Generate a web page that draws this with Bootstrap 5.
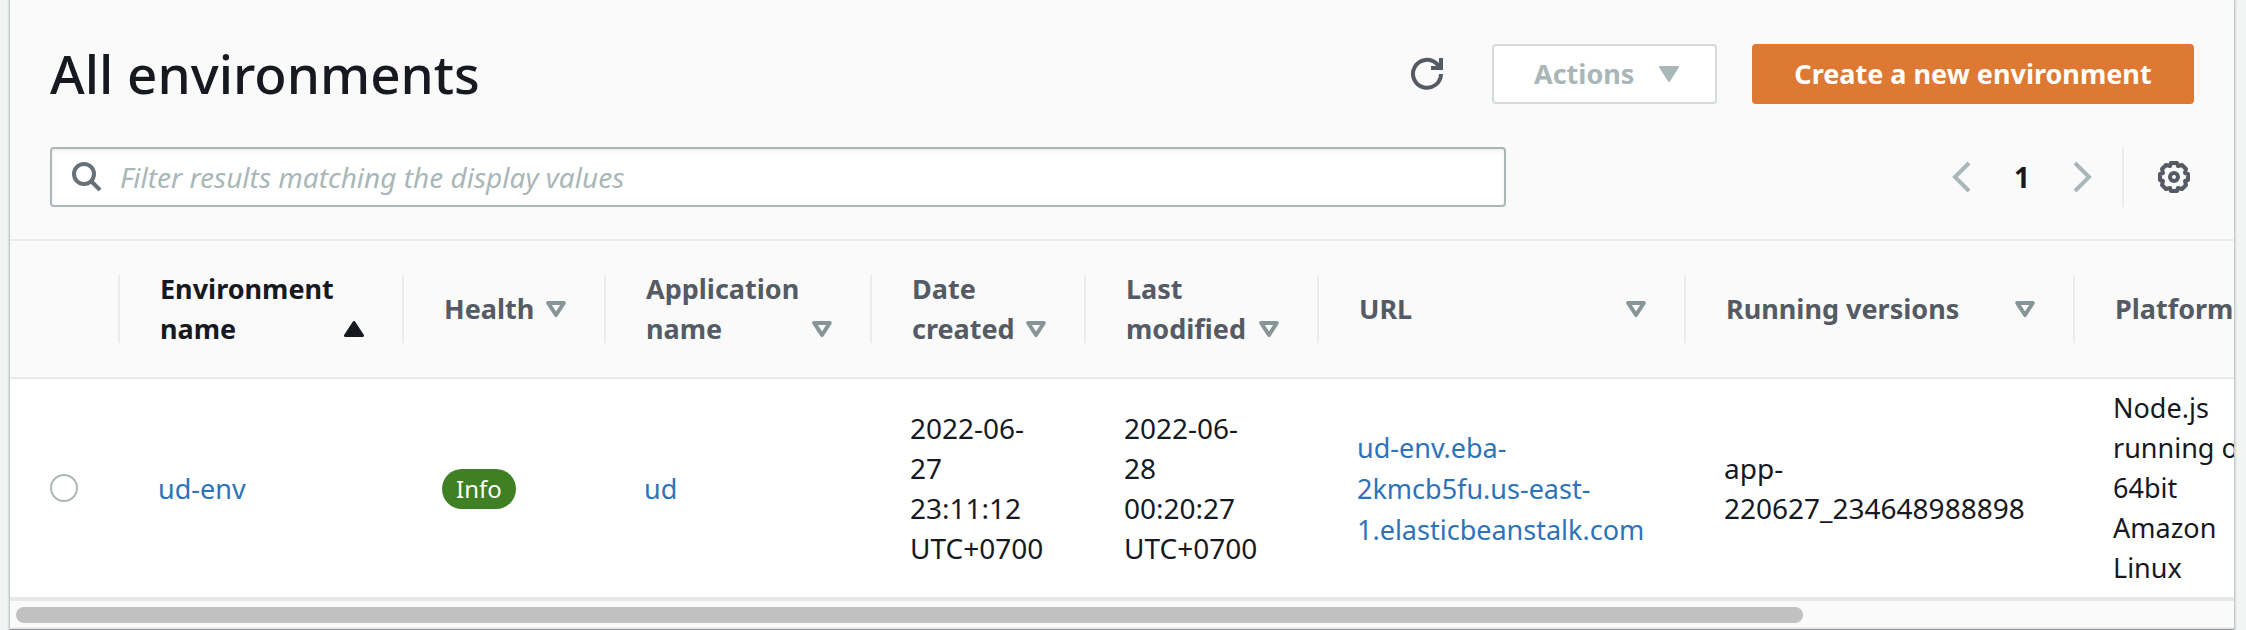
<!DOCTYPE html>
<html lang="en">
<head>
<meta charset="utf-8">
<meta name="viewport" content="width=device-width, initial-scale=1">
<title>All environments</title>
<link rel="stylesheet" href="https://cdn.jsdelivr.net/npm/bootstrap@5.3.0/dist/css/bootstrap.min.css">
<style>
  body { background: #f2f3f3; color: #16191f; font-family: "Noto Sans", "Open Sans", sans-serif; font-size: 28px; line-height: 40px; }
  a { color: #2e73b8; text-decoration: none; }
  .env-table a, .platform { font-size: 27px; }
  .env-panel { background: #fafafa; margin: 0 12px 0 10px; box-shadow: 0 0 2px 1px #aab7b8; border-bottom: 1px solid #879196; }
  .env-top { padding: 44px 40px 32px; }
  .env-title { font-size: 53px; line-height: 60px; font-weight: 500; }
  .btn { --bs-btn-font-size: 27px; --bs-btn-line-height: 40px; --bs-btn-font-weight: 700; --bs-btn-border-radius: 4px; --bs-btn-border-width: 2px; --bs-btn-padding-y: 8px; --bs-btn-padding-x: 40px; }
  .btn-quiet { --bs-btn-disabled-color: #aab7b8; --bs-btn-disabled-bg: #fff; --bs-btn-disabled-border-color: #d5dbdb; --bs-btn-disabled-opacity: 1; width: 225px; padding-right: 36px; }
  .btn-create { --bs-btn-color: #fff; --bs-btn-bg: #dd7933; --bs-btn-border-color: #dd7933; --bs-btn-hover-color: #fff; --bs-btn-hover-bg: #c96a28; width: 442px; margin-left: 35px; }
  .icon-btn { background: none; border: 0; padding: 0; display: flex; color: #545b64; }
  .icon-btn:disabled { color: #aab7b8; }
  .tools { margin-top: 27px; }
  .filter-box { width: 67.9%; height: 60px; background: #fff; border: 2px solid #aab7b8; border-radius: 4px; padding-left: 20px; box-shadow: inset 0 2px 4px #0001; color: #687078; }
  .filter-box input { font-size: 28px; line-height: 40px; margin-left: 18px; }
  .filter-box input::placeholder { color: #aab7b8; font-style: italic; }
  .page-no { width: 100px; }
  .next { margin-right: 30px; }
  .pager-end { height: 60px; border-left: 2px solid #eaeded; padding: 14px 4px 0 34px; }
  .env-scroll { overflow: hidden; border-top: 2px solid #eaeaea; }
  .env-table { table-layout: fixed; width: 2757px; border-collapse: separate; border-spacing: 0; }
  .env-table th { padding: 28px 0; border-bottom: 2px solid #eaeaea; vertical-align: middle; }
  .env-table td { height: 222px; padding: 9px 0 9px 38px; border-bottom: 4px solid #e8e8e8; background: #fff; vertical-align: middle; white-space: nowrap; }
  .head-cell { min-height: 68px; border-left: 2px solid #eaeded; margin: 6px 0 6px -2px; padding: 0 40px; }
  .head-cell button { background: none; border: 0; padding: 0; width: 100%; margin: -6px 0; text-align: left; font-size: 27px; font-weight: 700; color: #545b64; }
  .head-cell button svg { margin-bottom: 12px; color: #879596; }
  .head-cell button.sorted, .head-cell button.sorted svg { color: #16191f; }
  .pick { appearance: none; display: block; width: 28px; height: 28px; border: 2px solid #aab7b8; border-radius: 50%; background: #fff; margin: 0 0 0 2px; }
  .pick:checked { border: 8px solid #2e73b8; }
  .health { font-size: 24px; line-height: 40px; padding: 0 14px; background: #3f8024; color: #fff; border-radius: 20px; display: inline-block; }
  .track { padding: 6px; height: 26px; }
  .thumb { height: 16px; border-radius: 8px; background: #c1c1c1; }
  .track-end { height: 2px; background: #eaeaea; }
  .c-pick { width: 110px } .c-env { width: 284px } .c-health { width: 202px } .c-app { width: 266px }
  .c-made { width: 214px } .c-mod { width: 233px } .c-url { width: 367px } .c-ver { width: 389px }
</style>
</head>
<body>
<svg class="d-none" aria-hidden="true">
  <symbol id="sort" viewBox="0 0 20 16"><path d="M2.200 2H17.800L10 14Z" fill="none" stroke="currentColor" stroke-width="4" stroke-linejoin="round"/></symbol>
  <symbol id="sort-up" viewBox="0 0 20 16"><path d="M1.500 14.500H18.500L10 1.500Z" fill="currentColor" stroke="currentColor" stroke-width="3" stroke-linejoin="round"/></symbol>
</svg>
<main class="env-panel">
  <div class="env-top">
    <header class="d-flex align-items-center">
      <h1 class="env-title mb-0 me-auto">All environments</h1>
      <button class="icon-btn me-5" type="button" aria-label="Refresh">
        <svg width="34" height="34" viewBox="0 0 34 34" fill="none" stroke="currentColor" stroke-width="4"><path d="M31 17A14 14 0 1 1 27 7L31 11"/><path d="M31 1V11H21"/></svg>
      </button>
      <button class="btn btn-quiet d-flex align-items-center justify-content-between" type="button" disabled>Actions
        <svg width="20" height="16" viewBox="0 0 20 16" fill="currentColor" stroke="currentColor" stroke-width="2" stroke-linejoin="round"><path d="M1 1H19L10 15Z"/></svg>
      </button>
      <button class="btn btn-create px-0" type="button">Create a new environment</button>
    </header>
    <div class="d-flex align-items-center pt-3 tools">
      <label class="filter-box d-flex align-items-center me-auto">
        <svg width="30" height="30" viewBox="0 0 30 30" fill="none" stroke="currentColor" stroke-width="4"><circle cx="12" cy="12" r="10"/><path d="M19 19L28 28"/></svg>
        <input class="border-0 bg-transparent flex-grow-1 p-0" type="text" placeholder="Filter results matching the display values" aria-label="Filter environments">
      </label>
      <nav class="d-flex align-items-center" aria-label="Pages">
        <button class="icon-btn" type="button" aria-label="Previous page" disabled><svg width="20" height="32" viewBox="0 0 20 32" fill="none" stroke="currentColor" stroke-width="4"><path d="M17 2L3 16L17 30"/></svg></button>
        <b class="page-no text-center">1</b>
        <button class="icon-btn next" type="button" aria-label="Next page" disabled><svg width="20" height="32" viewBox="0 0 20 32" fill="none" stroke="currentColor" stroke-width="4"><path d="M3 2L17 16L3 30"/></svg></button>
      </nav>
      <div class="pager-end">
        <button class="icon-btn" type="button" aria-label="Preferences">
          <svg width="32" height="32" viewBox="0 0 32 32" fill="none" stroke="currentColor" stroke-width="4" stroke-linejoin="round"><path d="M13 2H19L20 5L24 4L28 8L27 12L30 13V19L27 20L28 24L24 28L20 27L19 30H13L12 27L8 28L4 24L5 20L2 19V13L5 12L4 8L8 4L12 5Z"/><circle cx="16" cy="16" r="4"/></svg>
        </button>
      </div>
    </div>
  </div>
  <div class="env-scroll">
    <table class="env-table">
      <colgroup><col class="c-pick"><col class="c-env"><col class="c-health"><col class="c-app"><col class="c-made"><col class="c-mod"><col class="c-url"><col class="c-ver"><col></colgroup>
      <thead>
        <tr>
          <th scope="col" aria-label="Select"></th>
          <th scope="col"><div class="head-cell d-flex align-items-center"><button class="sorted d-flex justify-content-between align-items-end" type="button"><span>Environment<br>name</span><svg width="20" height="16"><use href="#sort-up"/></svg></button></div></th>
          <th scope="col"><div class="head-cell d-flex align-items-center"><button class="d-flex justify-content-between align-items-end" type="button"><span>Health</span><svg width="20" height="16"><use href="#sort"/></svg></button></div></th>
          <th scope="col"><div class="head-cell d-flex align-items-center"><button class="d-flex justify-content-between align-items-end" type="button"><span>Application<br>name</span><svg width="20" height="16"><use href="#sort"/></svg></button></div></th>
          <th scope="col"><div class="head-cell d-flex align-items-center"><button class="d-flex justify-content-between align-items-end" type="button"><span>Date<br>created</span><svg width="20" height="16"><use href="#sort"/></svg></button></div></th>
          <th scope="col"><div class="head-cell d-flex align-items-center"><button class="d-flex justify-content-between align-items-end" type="button"><span>Last<br>modified</span><svg width="20" height="16"><use href="#sort"/></svg></button></div></th>
          <th scope="col"><div class="head-cell d-flex align-items-center"><button class="d-flex justify-content-between align-items-end" type="button"><span>URL</span><svg width="20" height="16"><use href="#sort"/></svg></button></div></th>
          <th scope="col"><div class="head-cell d-flex align-items-center"><button class="d-flex justify-content-between align-items-end" type="button"><span>Running versions</span><svg width="20" height="16"><use href="#sort"/></svg></button></div></th>
          <th scope="col"><div class="head-cell d-flex align-items-center"><button type="button">Platform</button></div></th>
        </tr>
      </thead>
      <tbody>
        <tr>
          <td><input class="pick" type="radio" name="environment" aria-label="Select ud-env"></td>
          <td><a href="#">ud-env</a></td>
          <td><span class="health">Info</span></td>
          <td><a href="#">ud</a></td>
          <td>2022-06-<br>27<br>23:11:12<br>UTC+0700</td>
          <td>2022-06-<br>28<br>00:20:27<br>UTC+0700</td>
          <td><a href="#">ud-env.eba-<br>2kmcb5fu.us-east-<br>1.elasticbeanstalk.com</a></td>
          <td>app-<br>220627_234648988898</td>
          <td class="platform">Node.js<br>running on<br>64bit<br>Amazon<br>Linux</td>
        </tr>
      </tbody>
    </table>
  </div>
  <div class="track"><div class="thumb" style="width: 80.8%"></div></div>
  <div class="track-end"></div>
</main>
<script src="https://cdn.jsdelivr.net/npm/bootstrap@5.3.0/dist/js/bootstrap.bundle.min.js"></script>
</body>
</html>
